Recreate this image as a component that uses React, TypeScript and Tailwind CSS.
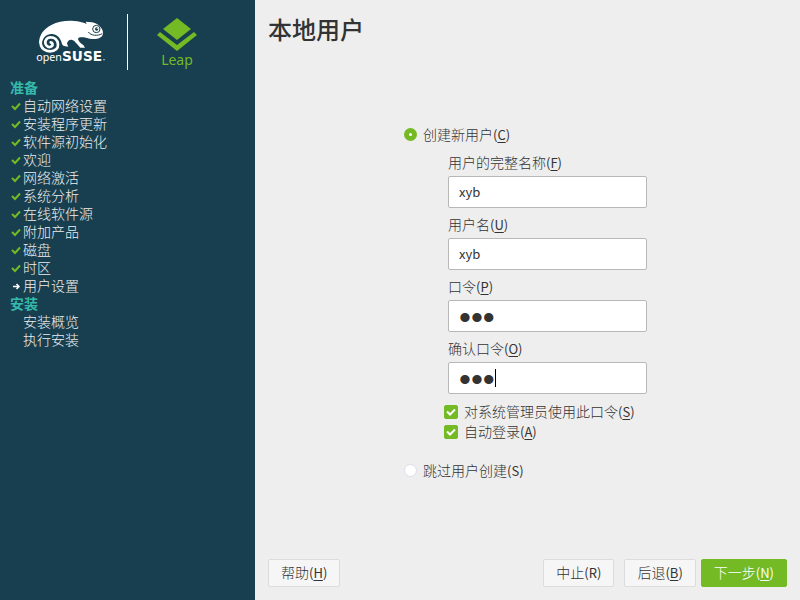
import { useState } from "react";
import type { ReactNode } from "react";

const steps = [
  { name: "准备", status: "heading" },
  { name: "自动网络设置", status: "done" },
  { name: "安装程序更新", status: "done" },
  { name: "软件源初始化", status: "done" },
  { name: "欢迎", status: "done" },
  { name: "网络激活", status: "done" },
  { name: "系统分析", status: "done" },
  { name: "在线软件源", status: "done" },
  { name: "附加产品", status: "done" },
  { name: "磁盘", status: "done" },
  { name: "时区", status: "done" },
  { name: "用户设置", status: "current" },
  { name: "安装", status: "heading" },
  { name: "安装概览", status: "todo" },
  { name: "执行安装", status: "todo" },
];

function OpenSuseLogo() {
  return (
    <svg viewBox="108 60 210 132" className="h-11 w-[70px]" role="img" aria-label="openSUSE">
      <path
        fill="#fff"
        d="M117 130 C117 104 132 86 154 75 C174 65 198 61 222 63 C236 64 248 67 260 72 L257 65 L276 67 C284 68 292 72 298 77 C305 84 309 91 309 98 C310 107 302 114 291 116 C280 119 268 116 258 113 C246 111 236 111 234 116 C235 124 242 129 250 135 L255 143 L241 143 C232 134 224 121 215 119 C207 118 202 124 201 131 L205 140 L192 138 C188 136 186 133 185 128 C181 113 170 103 156 102 C140 101 128 112 126 130 Z"
      />
      <path
        fill="none"
        stroke="#fff"
        strokeWidth="8"
        strokeLinecap="round"
        d="M122 130 C123 145 136 154 150 154 C166 154 175 145 174 133 C173 119 163 112 152 112 C141 112 135 121 136 130 C138 141 149 144 155 139 C160 135 158 128 152 127"
      />
      <circle cx="289" cy="87" r="11" fill="#fff" stroke="#173f4f" strokeWidth="3" />
      <circle cx="290" cy="87" r="5" fill="#173f4f" />
      <circle cx="292" cy="85" r="2" fill="#fff" />
      <path d="M265 96 C273 107 292 109 307 101" fill="none" stroke="#173f4f" strokeWidth="3" />
      <text x="109" y="182" fill="#fff" fontSize="32" fontWeight="400" fontFamily="Noto Sans, sans-serif">
        open
      </text>
      <text x="186" y="182" fill="#fff" fontSize="41" fontWeight="700" fontFamily="DejaVu Sans, sans-serif">
        SUSE
      </text>
      <circle cx="312" cy="179" r="2" fill="#fff" />
    </svg>
  );
}

function LeapLogo() {
  return (
    <div className="flex flex-col items-center text-[#73ba25]">
      <svg viewBox="0 0 40 33" className="h-[33px] w-10" fill="currentColor" aria-hidden="true">
        <path d="M20 0 L34 11 L20 22 L6 11 Z" />
        <path d="M3 14 L20 27 L37 14 L40 17 L20 33 L0 17 Z" />
      </svg>
      <span className="font-['Noto_Sans',sans-serif] text-sm leading-[18px] font-normal">Leap</span>
    </div>
  );
}

function StepIcon({ status }: { status: string }) {
  if (status === "done") {
    return (
      <svg viewBox="0 0 10 10" className="h-2.5 w-2.5" aria-hidden="true">
        <path d="M1 5 L4 8 L9 2.5" fill="none" stroke="#73ba25" strokeWidth="2" />
      </svg>
    );
  }
  if (status === "current") {
    return (
      <svg viewBox="0 0 10 10" className="h-2.5 w-2.5" aria-hidden="true">
        <path d="M2 5.5 H8 M5.5 3 L8 5.5 L5.5 8" fill="none" stroke="#fff" strokeWidth="1.5" />
      </svg>
    );
  }
  return null;
}

// Label followed by its keyboard shortcut, e.g. 帮助(H)
function Mnemonic({ text, letter, plain }: { text: string; letter: string; plain?: boolean }) {
  return (
    <>
      {text}
      <span className="font-['Noto_Sans_CJK_SC',sans-serif] text-[13px] font-normal">
        (<span className={plain ? "" : "underline underline-offset-2"}>{letter}</span>)
      </span>
    </>
  );
}

type FieldProps = {
  id: string;
  label: string;
  letter: string;
  value: string;
  onChange: (value: string) => void;
  password?: boolean;
  caret?: boolean;
};

function Field({ id, label, letter, value, onChange, password, caret }: FieldProps) {
  return (
    <div className="flex flex-col">
      <label htmlFor={id} className="leading-[26px]">
        <Mnemonic text={label} letter={letter} />
      </label>
      <div className="relative">
        <input
          id={id}
          type={password ? "password" : "text"}
          value={value}
          onChange={(e) => onChange(e.target.value)}
          className={`block h-8 w-full rounded-xs border border-[#b8b8b8] bg-white px-2.5 font-normal text-[#333] outline-none ${
            password
              ? "pt-1 font-['Liberation_Sans',sans-serif] text-[34px] leading-6"
              : "font-['Noto_Sans_CJK_SC',sans-serif] text-[13px]"
          }`}
        />
        {caret && <span className="absolute top-[7px] left-[47px] h-[18px] w-px bg-black" />}
      </div>
    </div>
  );
}

type ChoiceProps = {
  checked: boolean;
  onChange: () => void;
  children: ReactNode;
};

function Radio({ checked, onChange, children }: ChoiceProps) {
  return (
    <label className="flex items-center gap-1.5 leading-5">
      <input
        type="radio"
        name="user-mode"
        checked={checked}
        onChange={onChange}
        className="h-[13px] w-[13px] appearance-none rounded-full border border-[#dcdfe8] bg-white checked:border-[5px] checked:border-[#73ba25]"
      />
      <span>{children}</span>
    </label>
  );
}

function Checkbox({ checked, onChange, children }: ChoiceProps) {
  return (
    <label className="flex items-center gap-1.5 leading-5">
      <span className="relative flex">
        <input
          type="checkbox"
          checked={checked}
          onChange={onChange}
          className="h-3.5 w-3.5 appearance-none rounded-xs border border-[#c8c8c8] bg-white checked:border-[#73ba25] checked:bg-[#73ba25]"
        />
        {checked && (
          <svg viewBox="0 0 14 14" className="pointer-events-none absolute inset-0" aria-hidden="true">
            <path d="M3 6.5 L6 9.5 L11 4.5" fill="none" stroke="#fff" strokeWidth="2" />
          </svg>
        )}
      </span>
      <span>{children}</span>
    </label>
  );
}

function ActionButton({ children, primary }: { children: ReactNode; primary?: boolean }) {
  return (
    <button
      type="button"
      className={`h-7 rounded-xs border px-3 leading-5 ${
        primary ? "border-[#73ba25] bg-[#73ba25] text-white" : "border-[#dcdcdc] bg-[#f6f6f6]"
      }`}
    >
      {children}
    </button>
  );
}

export default function App() {
  const [mode, setMode] = useState("create");
  const [fullName, setFullName] = useState("xyb");
  const [username, setUsername] = useState("xyb");
  const [password, setPassword] = useState("xyb");
  const [confirm, setConfirm] = useState("xyb");
  const [useForRoot, setUseForRoot] = useState(true);
  const [autoLogin, setAutoLogin] = useState(true);

  return (
    <div className="flex min-h-screen bg-[#eee] font-['Liberation_Sans','Noto_Sans_CJK_SC',sans-serif] text-sm font-light text-[#333]">
      <aside className="w-[255px] shrink-0 bg-[#173f4f] text-[#eee]">
        <div className="flex items-start pt-3.5 pl-9">
          <div className="pt-1.5">
            <OpenSuseLogo />
          </div>
          <div className="mr-[29px] ml-[21px] h-14 w-px bg-white" />
          <div className="pt-1">
            <LeapLogo />
          </div>
        </div>
        <ul className="pt-[9px] pl-2.5 leading-[18px]">
          {steps.map((step) =>
            step.status === "heading" ? (
              <li key={step.name} className="font-bold text-[#35b9ab]">
                {step.name}
              </li>
            ) : (
              <li key={step.name} className="flex items-center">
                <span className="w-[13px] pl-px">
                  <StepIcon status={step.status} />
                </span>
                {step.name}
              </li>
            )
          )}
        </ul>
      </aside>

      <main className="flex flex-1 flex-col px-[13px] pt-4 pb-[13px]">
        <h1 className="text-2xl leading-[30px] font-medium">本地用户</h1>

        <form className="mx-auto my-auto flex w-[247px] flex-col" onSubmit={(e) => e.preventDefault()}>
          <Radio checked={mode === "create"} onChange={() => setMode("create")}>
            <Mnemonic text="创建新用户" letter="C" />
          </Radio>
          <div className="mt-[5px] mr-1 ml-11 flex flex-col gap-1">
            <Field id="full-name" label="用户的完整名称" letter="F" value={fullName} onChange={setFullName} />
            <Field id="username" label="用户名" letter="U" value={username} onChange={setUsername} />
            <Field id="password" label="口令" letter="P" value={password} onChange={setPassword} password />
            <Field id="confirm" label="确认口令" letter="O" value={confirm} onChange={setConfirm} password caret />
          </div>
          <div className="mt-2 ml-10 flex flex-col">
            <Checkbox checked={useForRoot} onChange={() => setUseForRoot(!useForRoot)}>
              <Mnemonic text="对系统管理员使用此口令" letter="S" />
            </Checkbox>
            <Checkbox checked={autoLogin} onChange={() => setAutoLogin(!autoLogin)}>
              <Mnemonic text="自动登录" letter="A" />
            </Checkbox>
          </div>
          <div className="mt-[19px]">
            <Radio checked={mode === "skip"} onChange={() => setMode("skip")}>
              <Mnemonic text="跳过用户创建" letter="S" plain />
            </Radio>
          </div>
        </form>

        <footer className="flex items-center">
          <ActionButton>
            <Mnemonic text="帮助" letter="H" />
          </ActionButton>
          <div className="ml-auto flex">
            <ActionButton>
              <Mnemonic text="中止" letter="R" plain />
            </ActionButton>
            <div className="mr-[5px] ml-2.5">
              <ActionButton>
                <Mnemonic text="后退" letter="B" />
              </ActionButton>
            </div>
            <ActionButton primary>
              <Mnemonic text="下一步" letter="N" />
            </ActionButton>
          </div>
        </footer>
      </main>
    </div>
  );
}
